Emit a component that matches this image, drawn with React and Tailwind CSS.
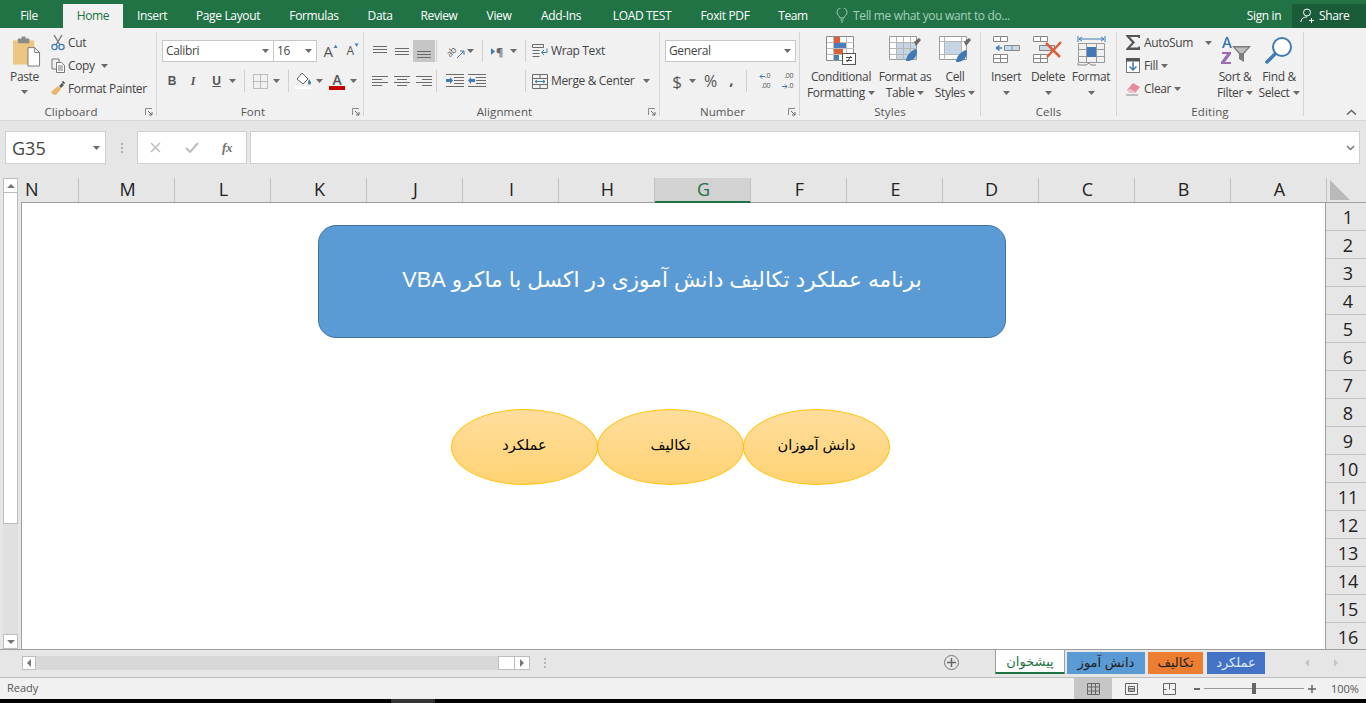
import React from "react";

const Caret = ({ c = "" }) => (
  <svg width="7" height="4" viewBox="0 0 7 4" className={"shrink-0 " + c}><path d="M0 0h7L3.500 4z" fill="#6a6a6a" /></svg>
);
const Sep = ({ c = "h-[22px]" }) => <div className={"w-px bg-[#d0d0d0] shrink-0 " + c} />;

function Group({ w, label, launcher = true, children }) {
  return (
    <div className={"relative h-[84px] mt-[4px] shrink-0 border-r border-[#d4d4d4] flex flex-col " + w}>
      <div className="h-[75px] shrink-0">{children}</div>
      <div className={"h-[10px] shrink-0 flex items-center justify-center text-[11.5px] leading-none text-[#555] tracking-[0.1px] " + (launcher ? "pr-[14px]" : "")}>{label}</div>
      {launcher && (
        <svg width="8" height="8" viewBox="0 0 8 8" className="absolute right-[3px] bottom-0">
          <path d="M0.500 7V0.500H7" stroke="#888" fill="none" />
          <path d="M3 3l4 4M7 4v3H4" stroke="#6a6a6a" fill="none" />
        </svg>
      )}
    </div>
  );
}

const Scissors = () => (
  <svg width="15" height="16" viewBox="0 0 15 16" fill="none">
    <path d="M3 0l6 10M11 0L5 10" stroke="#7a7a7a" strokeWidth="1.400" />
    <circle cx="3.500" cy="12" r="2.600" stroke="#3f7ab5" strokeWidth="1.300" />
    <circle cx="10.500" cy="12" r="2.600" stroke="#3f7ab5" strokeWidth="1.300" />
  </svg>
);
const CopyI = () => (
  <svg width="15" height="15" viewBox="0 0 15 15" fill="none" stroke="#777">
    <path d="M1 1h7v3M1 1v10h4" />
    <path d="M5.500 4.500h5l3 3v7h-8z" fill="#fff" />
    <path d="M7 8h5M7 10h5M7 12h5" />
  </svg>
);
const Brush = () => (
  <svg width="16" height="15" viewBox="0 0 16 15">
    <path d="M9 5l3-3 2 2-3 3z" fill="#5a5a5a" />
    <path d="M1 11l7-6 3 3-5 6c-2 0-4-1-5-3z" fill="#e8b66a" />
    <path d="M12 1l2 2 1-1-2-2z" fill="#333" />
  </svg>
);
const Paste = () => (
  <svg width="29" height="32" viewBox="0 0 30 32">
    <rect x="1" y="4" width="22" height="25" fill="#ecc781" />
    <rect x="6" y="2" width="12" height="5" rx="1" fill="#8a8a8a" />
    <rect x="10" y="0" width="4" height="3" fill="#8a8a8a" />
    <path d="M16.500 11.500h7l5 5v14h-12z" fill="#fff" stroke="#777" />
    <path d="M23.500 11.500v5h5" fill="none" stroke="#777" />
  </svg>
);

const ToolRow = ({ icon, label, caret, caretClass = "ml-[6px]", gap = "ml-[1px]" }) => (
  <div className="flex h-[23px] items-center">
    <div className="w-[18px] flex justify-center shrink-0">{icon}</div>
    <span className={"text-[12px] leading-none text-[#444] whitespace-nowrap " + gap}>{label}</span>
    {caret && <Caret c={caretClass} />}
  </div>
);

const FillIcon = () => (
  <svg width="19" height="18" viewBox="0 0 19 18" fill="none" className="shrink-0">
    <path d="M8 1l6 6-5 5-6-5z" fill="#fff" stroke="#666" />
    <path d="M15 7c1 2 2 3 2 4a1.500 1.500 0 01-3 0c0-1 .5-2 1-4z" fill="#4472a8" />
    <rect x="1" y="14" width="16" height="3" fill="#fff" />
  </svg>
);

const AlignLines = ({ kind }) => {
  const pos = { l: [[0, 16], [0, 10], [0, 16], [0, 10]], c: [[0, 16], [3, 10], [0, 16], [3, 10]], r: [[0, 16], [6, 10], [0, 16], [6, 10]] }[kind];
  return (
    <svg width="16" height="13" viewBox="0 0 16 13">
      {pos.map((p, i) => <rect key={i} x={p[0]} y={i * 3 + 1} width={p[1]} height="1" fill="#6b6b6b" />)}
    </svg>
  );
};
const VAlign = ({ y }) => (
  <svg width="16" height="14" viewBox="0 0 16 14">
    {[0, 3, 6].map((d) => <rect key={d} x="1" y={y + d} width="14" height="1" fill="#6b6b6b" />)}
  </svg>
);
const Indent = ({ rev }) => (
  <svg width="18" height="14" viewBox="0 0 18 14" className="shrink-0">
    {[1, 4, 7, 10, 13].map((y, i) => <rect key={y} x={i === 0 || i === 4 ? 0 : 8} y={y - 1} width={i === 0 || i === 4 ? 18 : 10} height="1" fill="#6b6b6b" />)}
    <path d={rev ? "M7 5H3V3L0 6.500 3 10V8h4z" : "M0 5h4V3l3 3.500L4 10V8H0z"} fill="#3f7ab5" />
  </svg>
);
const WrapIcon = () => (
  <svg width="16" height="15" viewBox="0 0 16 15" fill="none" stroke="#6b6b6b" className="shrink-0">
    <path d="M.5.500h11v3H.5zM.5 6.500h7M.5 9.500h7M.5 12.500h7" />
    <path d="M15 4.500v4h-5M12 6l-2.500 2.500L12 11" stroke="#3f7ab5" />
  </svg>
);
const MergeIcon = () => (
  <svg width="16" height="15" viewBox="0 0 16 15" fill="none" stroke="#6b6b6b" className="shrink-0">
    <path d="M.5.500h15v14H.5zM.5 4.500h15M.5 10.500h15M8 .5v4M8 10.500v4" />
    <path d="M3 7.500h10M5 6L3 7.500 5 9M11 6l2 1.500L11 9" stroke="#3f7ab5" />
  </svg>
);

const CondFmt = () => (
  <svg width="31" height="29" viewBox="0 0 31 29">
    <path d="M.5.500h27v24H.5z" fill="#fff" stroke="#8a8a8a" />
    <path d="M7.500 1v24M20.500 1v24M1 6.500h27M1 12.500h27M1 18.500h27" stroke="#bdbdbd" fill="none" />
    <rect x="8" y="1" width="6" height="6" fill="#d9603a" />
    <rect x="8" y="7" width="12" height="5" fill="#4a7fb8" />
    <rect x="8" y="13" width="9" height="5" fill="#d9603a" />
    <rect x="8" y="19" width="5" height="5" fill="#4a7fb8" />
    <rect x="16.500" y="17.500" width="13" height="11" fill="#fff" stroke="#555" />
    <path d="M20 21.500h6M20 24.500h6M25 20l-4 6" stroke="#444" fill="none" />
  </svg>
);
const FmtTable = () => (
  <svg width="32" height="29" viewBox="0 0 32 29">
    <path d="M.5.500h27v23H.5z" fill="#fff" stroke="#9a9a9a" />
    <rect x="7" y="6" width="20" height="17" fill="#c5d5e6" />
    <path d="M7.500 1v23M14.500 1v23M21.500 1v23M1 6.500h27M1 12.500h27M1 18.500h27" stroke="#b5b5b5" fill="none" />
    <path d="M25 6l5-4 2 2-5 6z" fill="#6a6a6a" />
    <path d="M17 25c0-6 6-11 10-12 2 2 1 8-4 11-2 1-4 1-6 1z" fill="#3f7ab5" />
  </svg>
);
const CellSt = () => (
  <svg width="32" height="29" viewBox="0 0 32 29">
    <path d="M.5.500h27v23H.5z" fill="#fff" stroke="#9a9a9a" />
    <rect x="5" y="5" width="18" height="13" fill="#c5d5e6" />
    <path d="M5.500 1v23M22.500 1v23M1 5.500h27M1 18.500h27" stroke="#b5b5b5" fill="none" />
    <path d="M25 6l5-4 2 2-5 6z" fill="#6a6a6a" />
    <path d="M17 26c0-6 6-11 10-12 2 2 1 8-4 11-2 1-4 1-6 1z" fill="#3f7ab5" />
  </svg>
);
const InsertI = () => (
  <svg width="27" height="27" viewBox="0 0 27 27">
    <path d="M.5.500h14v5H.5zM7.500 .5v5M.5 18.500h14v8H.5zM.5 22.500h14M7.500 18.500v8" fill="#fff" stroke="#888" />
    <path d="M11.500 9.500h15v5h-15zM19 9.500v5" fill="#c9d9e8" stroke="#888" />
    <path d="M9 12H4M6.500 9.500L3.500 12l3 2.500" stroke="#3f7ab5" strokeWidth="1.500" fill="none" />
  </svg>
);
const DeleteI = () => (
  <svg width="30" height="27" viewBox="0 0 30 27">
    <path d="M.5.500h14v5H.5zM7.500 .5v5M.5 18.500h14v8H.5zM.5 22.500h14M7.500 18.500v8" fill="#fff" stroke="#888" />
    <rect x="6.500" y="9.500" width="15" height="5" fill="#c9d9e8" stroke="#888" />
    <path d="M13 7l14 14M28 6L14 21" stroke="#d9603a" strokeWidth="2.500" fill="none" />
  </svg>
);
const FormatI = () => (
  <svg width="29" height="30" viewBox="0 0 29 30" fill="none">
    <path d="M1 0v6M28 0v6M2 3h25M2 3l3-2M2 3l3 2M27 3l-3-2M27 3l-3 2" stroke="#3f7ab5" />
    <path d="M1.500 7.500h26v19h-26zM9.500 7.500v19M19.500 7.500v19M1.500 13.500h26M1.500 20.500h26" stroke="#9a9a9a" />
    <rect x="10" y="11" width="9" height="10" fill="#3f7ab5" />
    <path d="M1 27v2h8l3-2 2 2h5" stroke="#888" />
  </svg>
);
const Sigma = () => (
  <svg width="15" height="15" viewBox="0 0 15 15"><path d="M0 0h14v3h-1.500l-.5-1H4l5 5.500L4 12.500h8l.5-1H14V15H0v-1l6-6.500L0 1z" fill="#555" /></svg>
);
const FillDown = () => (
  <svg width="14" height="15" viewBox="0 0 14 15">
    <rect x=".5" y=".5" width="13" height="14" fill="#fff" stroke="#777" />
    <rect x="0" y="0" width="14" height="3.500" fill="#555" />
    <path d="M7 4v8M3.500 8.500L7 12l3.500-3.500" stroke="#3f7ab5" strokeWidth="1.500" fill="none" />
  </svg>
);
const Eraser = () => (
  <svg width="15" height="14" viewBox="0 0 15 14">
    <path d="M1 8l6-7 7 4-5 6H4z" fill="#e58a9c" />
    <path d="M0 13h12" stroke="#888" />
    <path d="M1 8l3 3h5l1-1-6-3z" fill="#f2c2cc" />
  </svg>
);
const SortI = () => (
  <svg width="31" height="30" viewBox="0 0 31 30">
    <path d="M2 12L6 1h2l4 11h-2l-1-3H5l-1 3zM5.500 7.500h3L7 3z" fill="#3f7ab5" />
    <path d="M2 16h9v2l-6 8h6v2H1v-2l6-8H2z" fill="#9a6bb0" />
    <path d="M12 10h19l-7 8v8l-5-3v-5z" fill="#7d7d7d" />
    <path d="M15 11.500h13l-5 5.500h-3z" fill="#bdbdbd" />
  </svg>
);
const FindI = () => (
  <svg width="28" height="28" viewBox="0 0 28 28" fill="none">
    <circle cx="17" cy="11" r="9" stroke="#3f7ab5" strokeWidth="2" fill="#fff" />
    <path d="M10 18l-8 8" stroke="#3f7ab5" strokeWidth="3.500" strokeLinecap="round" />
  </svg>
);

const Big = ({ w, icon, l1, l2 }) => (
  <div className={"flex flex-col items-center shrink-0 " + w}>
    <div className="flex items-start justify-center h-[32px]">{icon}</div>
    <div className="mt-[1px] h-[16px] flex items-center text-[12px] leading-none text-[#444] whitespace-nowrap">{l1}</div>
    <div className="h-[16px] flex items-center text-[12px] leading-none text-[#444] whitespace-nowrap">
      {l2}
      <Caret c={l2 ? "ml-[3px]" : ""} />
    </div>
  </div>
);

const Tabs = ["Insert", "Page Layout", "Formulas", "Data", "Review", "View", "Add-Ins", "LOAD TEST", "Foxit PDF", "Team"];
const TabW = ["w-[58px]", "w-[94px]", "w-[78px]", "w-[54px]", "w-[64px]", "w-[56px]", "w-[68px]", "w-[94px]", "w-[72px]", "w-[64px]"];
const Cols = ["M", "L", "K", "J", "I", "H", "G", "F", "E", "D", "C", "B", "A"];
const Rows = Array.from({ length: 16 }, (_, i) => i + 1);
const ar = "font-['Liberation_Sans','DejaVu_Sans',sans-serif] tracking-normal";

export default function App() {
  return (
    <div className="relative w-[1366px] h-[703px] overflow-hidden bg-black flex flex-col font-['Open_Sans',sans-serif] tracking-[-0.35px] text-[#444]">
      {/* Title tabs */}
      <div className="h-[28px] bg-[#217346] flex items-end text-[12px] leading-none text-white shrink-0">
        <div className="w-[63px] shrink-0 h-[24px] flex items-center justify-center pr-[5px] pb-[1px]">File</div>
        <div className="w-[60px] shrink-0 h-[24px] flex items-center justify-center bg-[#f1f1f1] text-[#217346] pb-[1px]">Home</div>
        {Tabs.map((t, i) => (
          <div key={t} className={"shrink-0 h-[24px] flex items-center justify-center pb-[1px] whitespace-nowrap " + TabW[i]}>{t}</div>
        ))}
        <div className="w-[413px] shrink-0 h-[24px] flex items-center pb-[1px] text-[#a6cfb8]">
          <svg width="12" height="15" viewBox="0 0 12 15" fill="none" stroke="#a6cfb8" className="mr-[5px] ml-[11px]">
            <path d="M4 10c0-2-3-3-3-5.500a5 5 0 0110 0C11 7 8 8 8 10zM4.500 12h3M5 14h2" />
          </svg>
          Tell me what you want to do...
        </div>
        <div className="w-[52px] shrink-0 h-[24px] flex items-center justify-center pb-[1px] whitespace-nowrap">Sign in</div>
        <div className="ml-[2px] w-[74px] shrink-0 h-[24px] bg-[#1a5c38] flex items-center pl-[8px] pb-[1px]">
          <svg width="15" height="15" viewBox="0 0 15 15" fill="none" stroke="#fff" className="mr-[4px]">
            <circle cx="7" cy="4.500" r="3.500" />
            <path d="M1 14c0-3 2-5 6-5M9 12.500h5M11.500 10v5" />
          </svg>
          Share
        </div>
      </div>

      {/* Ribbon */}
      <div className="h-[93px] bg-[#f1f1f1] border-b border-[#d6d6d6] flex shrink-0 relative">
        <Group w="w-[157px]" label="Clipboard">
          <div className="flex">
            <div className="w-[49px] shrink-0 flex flex-col items-center pt-[4px]">
              <div className="ml-[4px] h-[32px]"><Paste /></div>
              <div className="mt-[1px] text-[12px] leading-[16px] text-[#444]">Paste</div>
              <Caret c="mt-[5px]" />
            </div>
            <div className="flex flex-col -mt-[1px]">
              <ToolRow icon={<Scissors />} label="Cut" />
              <ToolRow icon={<CopyI />} label="Copy" caret />
              <ToolRow icon={<Brush />} label="Format Painter" />
            </div>
          </div>
        </Group>

        <Group w="w-[207px]" label="Font">
          <div className="flex flex-col pl-[5px] pt-[8px]">
            <div className="flex items-center h-[22px]">
              <div className="w-[112px] shrink-0 h-[22px] bg-white border border-[#c6c6c6] flex items-center justify-between pl-[3px] pr-[4px] text-[12px]">Calibri<Caret /></div>
              <div className="ml-[-1px] w-[44px] shrink-0 h-[22px] bg-white border border-[#c6c6c6] flex items-center justify-between pl-[3px] pr-[4px] text-[12px]">16<Caret /></div>
              <div className="w-[22px] flex justify-center text-[15px] leading-none text-[#555] relative">A<span className="absolute right-[1px] top-[-1px] text-[6px] text-[#3f7ab5]">▲</span></div>
              <div className="w-[22px] flex justify-center text-[12px] leading-none text-[#555] relative">A<span className="absolute right-[2px] top-[-3px] text-[6px] text-[#3f7ab5]">▼</span></div>
            </div>
            <div className="flex items-center h-[22px] mt-[8px] text-[#555]">
              <div className="w-[20px] shrink-0 flex justify-center text-[12px] font-bold font-['Liberation_Sans',sans-serif]">B</div>
              <div className="w-[22px] shrink-0 flex justify-center text-[12px] italic font-bold font-['Liberation_Serif',serif]">I</div>
              <div className="w-[25px] shrink-0 flex justify-center text-[12px] underline font-bold font-['Liberation_Sans',sans-serif]">U</div>
              <Caret />
              <div className="w-[8px] shrink-0" /><Sep />
              <div className="w-[8px] shrink-0" />
              <svg width="15" height="15" viewBox="0 0 15 15" fill="none" stroke="#888" strokeDasharray="1 1" className="shrink-0"><path d="M.5.500h14v14H.5zM7.500 .5v14M.5 7.500h14" /></svg>
              <div className="w-[5px] shrink-0" />
              <Caret />
              <div className="w-[8px] shrink-0" /><Sep />
              <div className="w-[5px] shrink-0" />
              <FillIcon />
              <div className="w-[3px] shrink-0" /><Caret />
              <div className="w-[6px] shrink-0" />
              <div className="flex flex-col items-center w-[16px] shrink-0">
                <span className="text-[14px] leading-[13px] text-[#555] font-semibold">A</span>
                <div className="w-[16px] h-[4px] bg-[#c00000]" />
              </div>
              <div className="w-[5px] shrink-0" /><Caret />
            </div>
          </div>
        </Group>

        <Group w="w-[296px]" label="Alignment">
          <div className="flex flex-col pt-[8px] pl-[5px]">
            <div className="flex items-center h-[22px]">
              <div className="w-[22px] shrink-0 flex justify-center"><VAlign y={2} /></div>
              <div className="w-[22px] shrink-0 flex justify-center"><VAlign y={4} /></div>
              <div className="w-[22px] shrink-0 h-[22px] bg-[#c6c6c6] flex items-end justify-center pb-[3px]"><VAlign y={6} /></div>
              <div className="w-[1px] shrink-0" /><Sep />
              <div className="w-[9px] shrink-0" />
              <div className="relative w-[19px] h-[16px] shrink-0 flex items-center justify-start">
                <span className="-rotate-45 text-[9px] leading-none text-[#666]">ab</span>
                <svg width="9" height="9" viewBox="0 0 9 9" fill="none" stroke="#3f7ab5" className="absolute right-0 bottom-0"><path d="M1 8l7-7M4 1h4v4" /></svg>
              </div>
              <div className="w-[2px] shrink-0" /><Caret />
              <div className="w-[8px] shrink-0" /><Sep />
              <div className="w-[8px] shrink-0" />
              <div className="w-[14px] shrink-0 flex items-center">
                <svg width="4" height="7" viewBox="0 0 4 7"><path d="M0 0l4 3.500L0 7z" fill="#3f7ab5" /></svg>
                <span className="ml-[1px] text-[11px] leading-none font-bold text-[#666]">¶</span>
              </div>
              <div className="w-[5px] shrink-0" /><Caret />
              <div className="w-[8px] shrink-0" /><Sep />
              <div className="w-[6px] shrink-0" />
              <WrapIcon />
              <span className="ml-[3px] text-[12px] leading-none whitespace-nowrap">Wrap Text</span>
            </div>
            <div className="flex items-center h-[22px] mt-[8px]">
              <div className="w-[22px] shrink-0 flex justify-center"><AlignLines kind="l" /></div>
              <div className="w-[22px] shrink-0 flex justify-center"><AlignLines kind="c" /></div>
              <div className="w-[22px] shrink-0 flex justify-center"><AlignLines kind="r" /></div>
              <div className="w-[1px] shrink-0" /><Sep />
              <div className="w-[9px] shrink-0" />
              <Indent />
              <div className="w-[4px] shrink-0" />
              <Indent rev />
              <div className="w-[39px] shrink-0" /><Sep />
              <div className="w-[6px] shrink-0" />
              <MergeIcon />
              <span className="ml-[3px] text-[12px] leading-none whitespace-nowrap">Merge &amp; Center</span>
              <div className="w-[9px] shrink-0" /><Caret />
            </div>
          </div>
        </Group>

        <Group w="w-[140px]" label="Number">
          <div className="flex flex-col pt-[8px] pl-[5px]">
            <div className="w-[131px] h-[22px] bg-white border border-[#c6c6c6] flex items-center justify-between pl-[3px] pr-[4px] text-[12px]">General<Caret /></div>
            <div className="flex items-center h-[22px] mt-[8px]">
              <div className="w-[14px] shrink-0 ml-[5px] flex justify-center text-[17px] leading-none text-[#555]">$</div>
              <div className="w-[5px] shrink-0" /><Caret />
              <div className="w-[8px] shrink-0" />
              <span className="text-[16px] leading-none text-[#555] tracking-normal">%</span>
              <div className="w-[12px] shrink-0" />
              <span className="text-[15px] font-bold leading-none text-[#555] pb-[4px]">,</span>
              <div className="w-[13px] shrink-0" /><Sep />
              <div className="w-[8px] shrink-0" />
              <div className="w-[15px] shrink-0 flex flex-col text-[7px] leading-[10px] text-[#555] items-end">
                <div className="flex items-center h-[10px]">
                  <svg width="6" height="5" viewBox="0 0 6 5" fill="none" stroke="#3f7ab5"><path d="M6 2.500H1M3 .5l-2 2 2 2" /></svg>
                  <span>.0</span>
                </div>
                <div className="h-[10px]">.00</div>
              </div>
              <div className="w-[8px] shrink-0" />
              <div className="w-[15px] shrink-0 flex flex-col text-[7px] leading-[10px] text-[#555] items-end">
                <div className="h-[10px]">.00</div>
                <div className="flex items-center h-[10px]">
                  <svg width="6" height="5" viewBox="0 0 6 5" fill="none" stroke="#3f7ab5"><path d="M0 2.500h5M3 .5l2 2-2 2" /></svg>
                  <span>.0</span>
                </div>
              </div>
            </div>
          </div>
        </Group>

        <Group w="w-[181px]" label="Styles" launcher={false}>
          <div className="flex pl-[6px] pt-[4px]">
            <Big w="w-[70px]" icon={<CondFmt />} l1="Conditional" l2="Formatting" />
            <Big w="w-[58px]" icon={<FmtTable />} l1="Format as" l2="Table" />
            <Big w="w-[42px]" icon={<CellSt />} l1="Cell" l2="Styles" />
          </div>
        </Group>

        <Group w="w-[136px]" label="Cells" launcher={false}>
          <div className="flex pl-[4px] pt-[4px]">
            <Big w="w-[42px]" icon={<InsertI />} l1="Insert" />
            <Big w="w-[42px]" icon={<DeleteI />} l1="Delete" />
            <Big w="w-[44px]" icon={<FormatI />} l1="Format" />
          </div>
        </Group>

        <Group w="w-[187px]" label="Editing" launcher={false}>
          <div className="flex pl-[7px]">
            <div className="flex flex-col w-[102px] shrink-0 -mt-[1px]">
              <ToolRow icon={<Sigma />} label="AutoSum" caret caretClass="ml-[12px]" gap="ml-[2px]" />
              <ToolRow icon={<FillDown />} label="Fill" caret caretClass="ml-[3px]" gap="ml-[2px]" />
              <ToolRow icon={<Eraser />} label="Clear" caret caretClass="ml-[3px]" gap="ml-[2px]" />
            </div>
            <div className="flex pt-[4px] ml-[-13px]">
              <Big w="w-[44px]" icon={<SortI />} l1="Sort &" l2="Filter" />
              <Big w="w-[44px]" icon={<FindI />} l1="Find &" l2="Select" />
            </div>
          </div>
        </Group>

        <svg width="11" height="6" viewBox="0 0 11 6" fill="none" stroke="#666" strokeWidth="1.500" className="absolute right-[9px] bottom-[5px]">
          <path d="M1 5.500l4.500-4 4.500 4" />
        </svg>
      </div>

      {/* Formula bar */}
      <div className="h-[57px] bg-[#e6e6e6] shrink-0 flex items-start pt-[10px] pl-[5px]">
        <div className="w-[101px] h-[33px] bg-white border border-[#d0d0d0] flex items-center justify-between pl-[6px] pr-[5px] text-[18px] tracking-normal leading-none text-[#444]">
          G35<Caret />
        </div>
        <div className="w-[31px] h-[33px] flex flex-col items-center justify-center gap-[2px]">
          {[0, 1, 2].map((i) => <div key={i} className="w-[2px] h-[2px] bg-[#b0b0b0]" />)}
        </div>
        <div className="w-[110px] h-[33px] bg-white border border-[#d0d0d0] flex items-center text-[#b5b5b5]">
          <div className="w-[35px] flex justify-center"><svg width="11" height="11" viewBox="0 0 11 11" stroke="#bdbdbd" strokeWidth="1.500"><path d="M1 1l9 9M10 1l-9 9" /></svg></div>
          <div className="w-[37px] flex justify-center"><svg width="14" height="11" viewBox="0 0 14 11" fill="none" stroke="#bdbdbd" strokeWidth="2"><path d="M1 6l4 4 8-9" /></svg></div>
          <div className="w-[34px] flex justify-center text-[13px] italic font-bold leading-none text-[#707070] font-['Liberation_Serif',serif]">fx</div>
        </div>
        <div className="ml-[3px] w-[1110px] h-[33px] bg-white border border-[#d0d0d0] flex items-center justify-end pr-[4px]">
          <svg width="9" height="6" viewBox="0 0 9 6" fill="none" stroke="#777" strokeWidth="1.500"><path d="M1 1l3.500 3.500L8 1" /></svg>
        </div>
      </div>

      {/* Sheet area */}
      <div className="h-[471px] shrink-0 bg-[#e6e6e6] flex relative overflow-hidden">
        {/* Vertical scrollbar */}
        <div className="w-[21px] shrink-0 flex flex-col pl-[3px]">
          <div className="w-[15px] h-[15px] bg-white border border-[#bdbdbd] flex items-center justify-center"><svg width="8" height="4" viewBox="0 0 8 4"><path d="M4 0l4 4H0z" fill="#777" /></svg></div>
          <div className="w-[15px] h-[331px] bg-white border border-[#bdbdbd] border-t-0" />
          <div className="w-[15px] h-[110px] bg-[#e0e0e0]" />
          <div className="w-[15px] h-[15px] bg-white border border-[#bdbdbd] flex items-center justify-center"><svg width="8" height="4" viewBox="0 0 8 4"><path d="M0 0h8L4 4z" fill="#777" /></svg></div>
        </div>
        <div className="flex-1 flex flex-col min-w-0">
          {/* Column headers */}
          <div className="h-[25px] flex shrink-0 border-b border-[#9f9f9f] text-[18px] tracking-normal leading-none text-[#222]">
            <div className="w-[58px] shrink-0 flex items-center pl-[4px] pb-[2px] border-r border-[#c2c2c2]">N</div>
            {Cols.map((c) => (
              <div key={c} className={"w-[96px] shrink-0 flex items-center justify-center pl-[2px] pb-[2px] border-r " + (c === "G" ? "bg-[#d2d2d2] text-[#217346] border-[#c2c2c2] border-b-2 border-b-[#217346] h-[25px]" : "border-[#c2c2c2]")}>{c}</div>
            ))}
            <div className="flex-1 pl-[3px] pt-[2px]">
              <svg width="20" height="20" viewBox="0 0 20 20"><path d="M0 0l20 20H0z" fill="#b9b9b9" /></svg>
            </div>
          </div>
          <div className="flex-1 flex min-h-0 overflow-hidden">
            {/* Canvas */}
            <div className={"w-[1305px] h-[446px] bg-white border-l border-[#9f9f9f] border-r flex flex-col shrink-0 " + ar}>
              <div dir="rtl" className="ml-[296px] mt-[22px] w-[688px] h-[113px] rounded-[18px] bg-[#5b9bd5] border border-[#41719c] flex items-center justify-center text-[21.7px] leading-none text-white pb-[4px]">
                برنامه عملکرد تکالیف دانش آموزی در اکسل با ماکرو VBA
              </div>
              <div className="ml-[429px] mt-[71px] flex">
                {["عملکرد", "تکالیف", "دانش آموزان"].map((t, i) => (
                  <div key={t} dir="rtl" className={"w-[147px] h-[76px] rounded-[50%] border border-[#ffc000] bg-linear-to-b from-[#ffdd9c] to-[#ffd272] flex items-center justify-center text-[14.5px] leading-none text-black pb-[3px] " + (i ? "ml-[-1px]" : "")}>{t}</div>
                ))}
              </div>
            </div>
            {/* Row headers */}
            <div className="flex-1 flex flex-col">
              {Rows.map((r) => (
                <div key={r} className="h-[28px] shrink-0 border-b border-[#c2c2c2] flex items-center justify-center pl-[4px] text-[18px] tracking-normal leading-none text-[#222]">{r}</div>
              ))}
            </div>
          </div>
        </div>
      </div>

      {/* Sheet tabs bar */}
      <div className="h-[28px] shrink-0 bg-[#e6e6e6] border-t border-[#9f9f9f] flex items-center relative pb-[2px]">
        <div className="ml-[22px] w-[14px] h-[14px] bg-white border border-[#bdbdbd] flex items-center justify-center"><svg width="4" height="8" viewBox="0 0 4 8"><path d="M4 0v8L0 4z" fill="#777" /></svg></div>
        <div className="w-[462px] h-[14px] bg-[#d8d8d8]" />
        <div className="w-[17px] h-[14px] bg-white border border-[#bdbdbd]" />
        <div className="w-[15px] h-[14px] bg-white border border-[#bdbdbd] border-l-0 flex items-center justify-center"><svg width="4" height="8" viewBox="0 0 4 8"><path d="M0 0v8l4-4z" fill="#777" /></svg></div>
        <div className="ml-[14px] flex flex-col gap-[2px]">
          {[0, 1, 2].map((i) => <div key={i} className="w-[2px] h-[2px] bg-[#b5b5b5]" />)}
        </div>
        <div className="ml-[398px] w-[15px] h-[15px] rounded-full border border-[#777] flex items-center justify-center">
          <svg width="9" height="9" viewBox="0 0 9 9" stroke="#666" strokeWidth="1.500"><path d="M4.500 0v9M0 4.500h9" /></svg>
        </div>
        <div className={"ml-[36px] flex self-start h-[24px] text-[13px] leading-none " + ar}>
          <div dir="rtl" className="w-[70px] h-[24px] bg-white border-l border-r border-[#9f9f9f] border-b-2 border-b-[#217346] flex items-center justify-center text-[#217346]">پیشخوان</div>
          <div className="w-[78px] h-[22px] flex items-center justify-center pb-[1px] bg-[#5b9bd5] text-[#222] ml-[2px] mt-[2px]" dir="rtl">دانش آموز</div>
          <div className="w-[55px] h-[22px] flex items-center justify-center pb-[1px] bg-[#ed7d31] text-[#222] ml-[3px] mt-[2px]" dir="rtl">تکالیف</div>
          <div className="w-[58px] h-[22px] flex items-center justify-center pb-[1px] bg-[#4472c4] text-[#dfe8f6] ml-[4px] mt-[2px]" dir="rtl">عملکرد</div>
        </div>
        <svg width="5" height="8" viewBox="0 0 5 8" className="ml-[40px]"><path d="M4 0v8L0 4z" fill="#c4c4c4" /></svg>
        <svg width="5" height="8" viewBox="0 0 5 8" className="ml-[24px]"><path d="M0 0v8l4-4z" fill="#c4c4c4" /></svg>
      </div>

      {/* Status bar */}
      <div className="h-[22px] shrink-0 bg-[#f1f1f1] border-t border-[#bdbdbd] flex items-center text-[11px] tracking-normal leading-none text-[#555]">
        <span className="ml-[7px] w-[1067px] shrink-0 pb-[2px]">Ready</span>
        <div className="w-[38px] shrink-0 h-[21px] bg-[#c6c6c6] flex items-center justify-center">
          <svg width="13" height="12" viewBox="0 0 13 12" fill="none" stroke="#666"><path d="M.5.500h12v11H.5zM4.500 .5v11M8.500 .5v11M.5 4h12M.5 8h12" /></svg>
        </div>
        <div className="w-[38px] shrink-0 flex justify-center">
          <svg width="13" height="12" viewBox="0 0 13 12" fill="none" stroke="#666"><path d="M.5.500h12v11H.5zM3.500 3.500h6v5h-6zM4 5.500h5M4 7h5" /></svg>
        </div>
        <div className="w-[38px] shrink-0 flex justify-center">
          <svg width="13" height="12" viewBox="0 0 13 12" fill="none" stroke="#666"><path d="M.5.500h12v11H.5zM6.500 .5v6M.5 6.500h3M9.500 6.500h3" /></svg>
        </div>
        <div className="ml-[6px] w-[6px] h-[2px] bg-[#666] shrink-0" />
        <div className="ml-[4px] w-[100px] h-px bg-[#999] relative shrink-0">
          <div className="absolute left-[48px] top-[-5px] w-[4px] h-[11px] bg-[#666]" />
        </div>
        <svg width="8" height="8" viewBox="0 0 8 8" stroke="#666" strokeWidth="1.500" className="ml-[4px] shrink-0"><path d="M4 0v8M0 4h8" /></svg>
        <span className="ml-[15px] whitespace-nowrap pb-[1px]">100%</span>
      </div>

      {/* Bottom strip */}
      <div className="flex-1 bg-black flex">
        <div className="ml-[391px] w-[44px] bg-[#333]" />
      </div>
    </div>
  );
}
